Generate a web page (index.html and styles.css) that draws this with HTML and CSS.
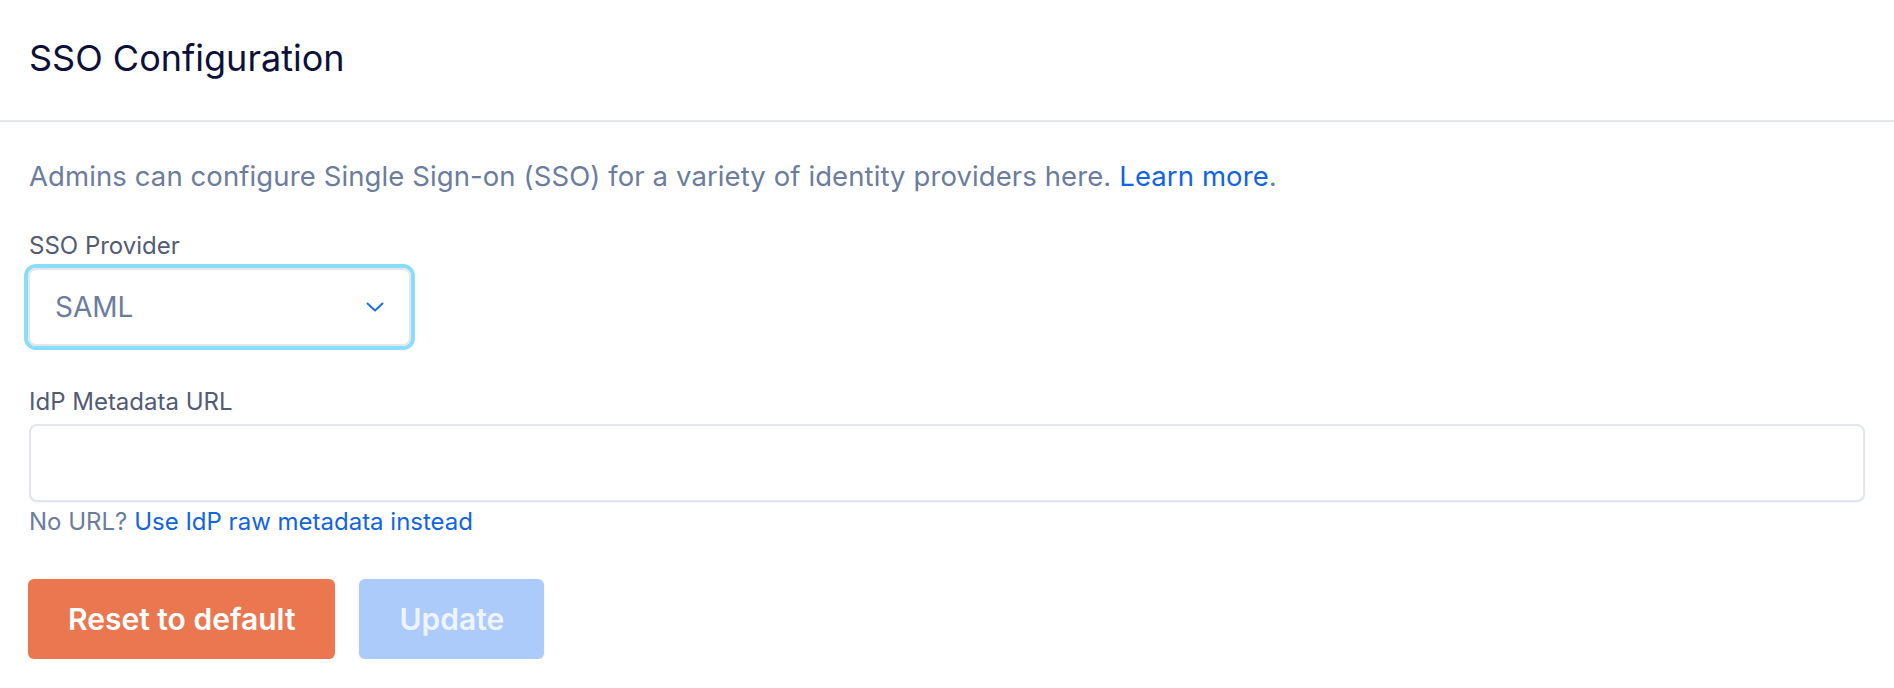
FILE: index.html
```html
<!DOCTYPE html>
<html lang="en">
<head>
<meta charset="utf-8">
<title>SSO Configuration</title>
<link rel="stylesheet" href="styles.css">
</head>
<body>
<div class="page">
  <header class="header">
    <h1 class="title">SSO Configuration</h1>
  </header>
  <main class="content">
    <p class="desc">Admins can configure Single Sign-on (SSO) for a variety of identity providers here. <a class="link" href="#">Learn more</a>.</p>

    <div class="field">
      <label class="label">SSO Provider</label>
      <div class="select">
        <span class="select-value">SAML</span>
        <svg class="chevron" width="18" height="10" viewBox="0 0 18 10" fill="none">
          <path d="M1.5 1.5 L9 8.5 L16.5 1.5" stroke="#1a6fe6" stroke-width="2" stroke-linecap="round" stroke-linejoin="round"/>
        </svg>
      </div>
    </div>

    <div class="field field-url">
      <label class="label">IdP Metadata URL</label>
      <div class="input"></div>
      <p class="help">No URL? <a class="link" href="#">Use IdP raw metadata instead</a></p>
    </div>

    <div class="actions">
      <button class="btn btn-reset">Reset to default</button>
      <button class="btn btn-update">Update</button>
    </div>
  </main>
</div>
</body>
</html>
```
FILE: styles.css
```css
* { box-sizing: border-box; }

html, body {
  margin: 0;
  padding: 0;
  background: #ffffff;
}

body {
  font-family: Inter, "Noto Sans", "Liberation Sans", sans-serif;
}

.page {
  width: 100%;
}

.header {
  padding: 36px 29px 40px;
  border-bottom: 2px solid #e4e7ee;
}

.title {
  margin: 0;
  font-size: 36px;
  line-height: 44px;
  font-weight: 400;
  color: #0d1138;
}

.content {
  padding: 36px 29px 0;
}

.desc {
  margin: 0;
  font-size: 27.5px;
  letter-spacing: 0.1px;
  line-height: 36px;
  color: #6b7c9d;
}

.link {
  color: #1264e3;
  text-decoration: none;
}

.field {
  margin-top: 36px;
  display: flex;
  flex-direction: column;
  align-items: flex-start;
}

.field-url {
  margin-top: 40px;
  align-items: stretch;
}

.label {
  font-size: 24px;
  line-height: 32px;
  color: #525b75;
}

.select {
  margin-top: 6px;
  margin-left: -1px;
  width: 383px;
  height: 78px;
  border: 2px solid #e3e6ed;
  border-radius: 8px;
  box-shadow: 0 0 0 4px #89ddf8;
  display: flex;
  align-items: center;
  justify-content: space-between;
  padding: 0 25px 0 25px;
}

.select-value {
  font-size: 28px;
  color: #6b7c9d;
}

.chevron {
  display: block;
}

.input {
  margin-top: 6px;
  height: 78px;
  border: 2px solid #e3e6ed;
  border-radius: 8px;
  background: #fff;
  box-shadow: 0 1px 2px rgba(20, 30, 60, 0.05);
}

.help {
  margin: 4px 0 0;
  font-size: 24px;
  line-height: 32px;
  color: #6b7c9d;
}

.actions {
  margin-top: 41px;
  display: flex;
  gap: 24px;
}

.btn {
  height: 80px;
  border: none;
  border-radius: 6px;
  font-family: Inter, "Noto Sans", "Liberation Sans", sans-serif;
  font-size: 30px;
  font-weight: 600;
  padding: 0 40px;
  box-shadow: 0 1px 3px rgba(0, 0, 0, 0.08);
  cursor: pointer;
}

.btn-reset {
  margin-left: -1px;
  background: #eb7750;
  color: #ffffff;
}

.btn-update {
  background: #adcbfa;
  color: #eef4fd;
}
```
